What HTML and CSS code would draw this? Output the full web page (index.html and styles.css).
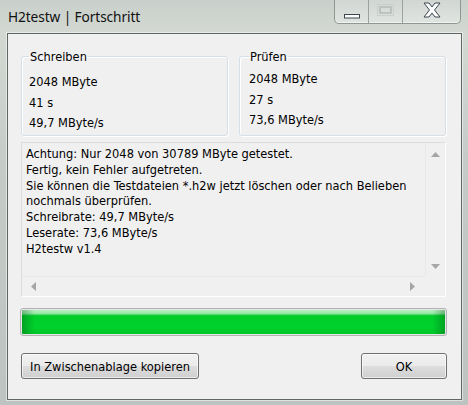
FILE: index.html
```html
<!DOCTYPE html>
<html lang="de">
<head>
<meta charset="utf-8">
<title>H2testw | Fortschritt</title>
<link rel="stylesheet" href="styles.css">
</head>
<body>
<div class="window">
  <div class="titlebar">
    <span class="title">H2testw | Fortschritt</span>
    <div class="caption-buttons">
      <div class="cap cap-min">
        <svg width="16" height="5" viewBox="0 0 16 5"><rect x="0.5" y="0.5" width="15" height="3.5" fill="#fff" stroke="#3c4650" stroke-width="1"/></svg>
      </div>
      <div class="cap cap-max">
        <svg width="17" height="12" viewBox="0 0 17 12"><rect x="0.5" y="0.5" width="16" height="11" fill="none" stroke="#c9cfcb" stroke-width="1"/><rect x="3" y="3" width="11" height="6" fill="none" stroke="#b4bab6" stroke-width="1.5"/></svg>
      </div>
      <div class="cap cap-close">
        <svg width="22" height="16" viewBox="0 0 22 16"><path d="M3 1 L8 1 L11 5 L14 1 L19 1 L13.5 8 L19 15 L14 15 L11 11 L8 15 L3 15 L8.5 8 Z" fill="#fff" stroke="#3c4650" stroke-width="1" stroke-linejoin="round"/></svg>
      </div>
    </div>
  </div>
  <div class="client">
    <div class="groups">
      <fieldset class="group">
        <legend>Schreiben</legend>
        <div class="val">2048 MByte</div>
        <div class="val">41 s</div>
        <div class="val">49,7 MByte/s</div>
      </fieldset>
      <fieldset class="group group-right">
        <legend>Prüfen</legend>
        <div class="val">2048 MByte</div>
        <div class="val">27 s</div>
        <div class="val">73,6 MByte/s</div>
      </fieldset>
    </div>
    <div class="memo">
      <div class="memo-main">
        <div class="memo-text">
          <div>Achtung: Nur 2048 von 30789 MByte getestet.</div>
          <div>Fertig, kein Fehler aufgetreten.</div>
          <div>Sie können die Testdateien *.h2w jetzt löschen oder nach Belieben</div>
          <div>nochmals überprüfen.</div>
          <div>Schreibrate: 49,7 MByte/s</div>
          <div>Leserate: 73,6 MByte/s</div>
          <div>H2testw v1.4</div>
        </div>
        <div class="vscroll">
          <svg width="9" height="5" viewBox="0 0 9 5"><path d="M0 5 L4.5 0 L9 5 Z" fill="#a6a6a6"/></svg>
          <svg width="9" height="5" viewBox="0 0 9 5"><path d="M0 0 L4.5 5 L9 0 Z" fill="#a6a6a6"/></svg>
        </div>
      </div>
      <div class="hscroll-row">
        <div class="hscroll">
          <svg width="5" height="9" viewBox="0 0 5 9"><path d="M5 0 L0 4.5 L5 9 Z" fill="#a6a6a6"/></svg>
          <svg width="5" height="9" viewBox="0 0 5 9"><path d="M0 0 L5 4.5 L0 9 Z" fill="#a6a6a6"/></svg>
        </div>
        <div class="corner"></div>
      </div>
    </div>
    <div class="progress"><div class="progress-fill"></div></div>
    <div class="buttons">
      <button class="btn btn-copy">In Zwischenablage kopieren</button>
      <button class="btn btn-ok">OK</button>
    </div>
  </div>
</div>
</body>
</html>
```
FILE: styles.css
```css
html, body {
  margin: 0;
  padding: 0;
}
body {
  width: 468px;
  height: 405px;
  overflow: hidden;
  font-family: "DejaVu Sans Condensed", "DejaVu Sans", sans-serif;
  font-size: 12.7px;
  color: #000;
}
.window {
  width: 468px;
  height: 405px;
  box-sizing: border-box;
  padding: 0 6px 5px 7px;
  background: linear-gradient(180deg, #c9cfca 0%, #d3d8d2 8%, #c5ccc8 40%, #bcc3c0 100%);
  display: flex;
  flex-direction: column;
}
.titlebar {
  height: 33px;
  flex: none;
  display: flex;
  align-items: flex-start;
  justify-content: space-between;
}
.title {
  font-family: "Noto Sans", "Open Sans", sans-serif;
  font-size: 13.7px;
  color: #111;
  margin-top: 7px;
  margin-left: 1px;
  letter-spacing: -0.1px;
}
.caption-buttons {
  display: flex;
  height: 23px;
  margin-right: 1px;
  border: 1px solid #8e9793;
  border-top: none;
  border-radius: 0 0 5px 5px;
  background: linear-gradient(180deg, rgba(255,255,255,0.15), rgba(255,255,255,0.35));
  box-shadow: inset 0 -1px 0 rgba(255,255,255,0.5);
}
.cap {
  display: flex;
  align-items: center;
  justify-content: center;
}
.cap-min {
  width: 34px;
  border-right: 1px solid #9aa39f;
  padding-top: 9px;
  box-sizing: border-box;
}
.cap-max {
  width: 34px;
  border-right: 1px solid #9aa39f;
  padding-bottom: 3px;
  box-sizing: border-box;
}
.cap-close {
  width: 57px;
  padding-bottom: 3px;
  box-sizing: border-box;
}
.client {
  flex: 1;
  background: #f0f0f0;
  border: 1px solid #5f6663;
  box-shadow: 0 0 0 1px rgba(255,255,255,0.5);
  padding: 15px 14px 0 12px;
  display: flex;
  flex-direction: column;
}
.groups {
  display: flex;
  gap: 11px;
  margin-left: 1px;
}
.group {
  width: 207px;
  height: 87px;
  box-sizing: border-box;
  margin: 0;
  padding: 8px 0 0 7px;
  border: 1px solid #d5dfe5;
  border-radius: 3px;
  box-shadow: inset 1px 1px 0 #fff, 1px 1px 0 #fff;
}
.group legend {
  padding: 0 1px;
  margin-left: 0;
  line-height: 15px;
}
.group-right {
  padding-top: 5px;
  padding-left: 9px;
}
.val {
  line-height: 20.5px;
}
.memo {
  margin-top: 6px;
  margin-left: 1px;
  width: 425px;
  height: 155px;
  box-sizing: border-box;
  border: 1px solid #dcdcdc;
  border-right-color: #fff;
  border-bottom-color: #fff;
  display: flex;
  flex-direction: column;
}
.memo-main {
  flex: 1;
  display: flex;
  min-height: 0;
}
.memo-text {
  flex: 1;
  padding: 3px 0 0 4px;
  line-height: 15.8px;
  white-space: nowrap;
  overflow: hidden;
}
.vscroll {
  width: 20px;
  flex: none;
  display: flex;
  flex-direction: column;
  justify-content: space-between;
  align-items: center;
  padding: 9px 0 7px;
  box-sizing: border-box;
  background: #f0f0f0;
  border-left: 1px solid #e8e8e8;
}
.hscroll-row {
  height: 20px;
  display: flex;
  flex: none;
}
.hscroll {
  flex: 1;
  display: flex;
  justify-content: space-between;
  align-items: center;
  padding: 0 10px 0 9px;
  border-top: 1px solid #e8e8e8;
}
.corner {
  width: 20px;
  background: #f0f0f0;
}
.progress {
  margin-top: 11px;
  width: 427px;
  height: 28px;
  box-sizing: border-box;
  border: 1px solid #b2b2b2;
  border-radius: 3px;
  background: #e6e6e6;
  padding: 1px;
}
.progress-fill {
  height: 100%;
  border-radius: 1px;
  background:
    linear-gradient(90deg, rgba(0,80,20,0.35) 0%, rgba(0,0,0,0) 3%, rgba(0,0,0,0) 97%, rgba(0,80,20,0.35) 100%),
    linear-gradient(180deg, #b9f0c2 0%, #9ae8a8 14%, #00cc2a 24%, #00d12c 70%, #00c628 100%);
}
.buttons {
  margin-top: 17px;
  margin-left: 1px;
  display: flex;
  justify-content: space-between;
}
.btn {
  font-family: "DejaVu Sans Condensed", "DejaVu Sans", sans-serif;
  font-size: 12.7px;
  color: #000;
  height: 26px;
  border: 1px solid #707070;
  border-radius: 3px;
  background: linear-gradient(180deg, #f2f2f2 0%, #ebebeb 48%, #dddddd 52%, #cfcfcf 100%);
  box-shadow: inset 0 0 0 1px rgba(255,255,255,0.6);
  padding: 0;
}
.btn-copy {
  width: 178px;
}
.btn-ok {
  width: 86px;
}
```
